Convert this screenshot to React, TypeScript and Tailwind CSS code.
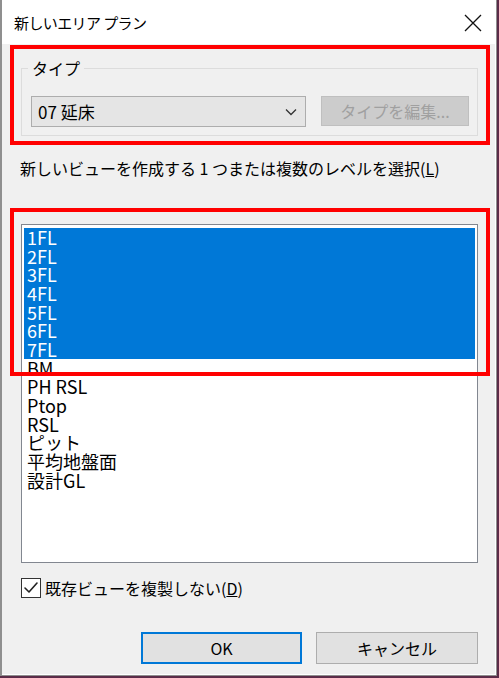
import React from "react";

const LEVELS = [
  { name: "1FL", selected: true },
  { name: "2FL", selected: true },
  { name: "3FL", selected: true },
  { name: "4FL", selected: true },
  { name: "5FL", selected: true },
  { name: "6FL", selected: true },
  { name: "7FL", selected: true },
  { name: "BM", selected: false },
  { name: "PH RSL", selected: false },
  { name: "Ptop", selected: false },
  { name: "RSL", selected: false },
  { name: "ピット", selected: false },
  { name: "平均地盤面", selected: false },
  { name: "設計GL", selected: false },
];

const FONT = "font-['Noto_Sans_CJK_JP','Noto_Sans',sans-serif]";

export default function App() {
  return (
    <div className={`relative h-[678px] w-[499px] bg-[#5b2c48] ${FONT} text-black`}>
      <div className="flex h-[676px] w-[497px] flex-col border-b border-l-2 border-r border-[#8f8f8f]">
        <div className="flex flex-1 flex-col border-b border-r border-white bg-[#f0f0f0]">
          {/* Title bar */}
          <div className="flex h-[44px] shrink-0 items-center justify-between bg-white pl-[12px] pr-[12px]">
            <span className="text-[15px] leading-none tracking-[-0.6px]">新しいエリア プラン</span>
            <svg width="18" height="18" viewBox="0 0 18 18" className="mr-[1px] mt-[1px]">
              <path d="M1 1 L17 17 M17 1 L1 17" stroke="#111" strokeWidth="1.3" />
            </svg>
          </div>

          {/* Body */}
          <div className="flex flex-1 flex-col pl-[19px] pr-[17px]">
            {/* Type group */}
            <div className="relative mt-[24px] h-[68px] border border-[#dcdcdc]">
              <span className="absolute -top-[12px] left-[6px] bg-[#f0f0f0] px-[4px] text-[16px] leading-[22px]">
                タイプ
              </span>
              <div className="ml-[9px] mt-[27px] flex gap-[15px]">
                <div className="flex h-[31px] w-[275px] items-center justify-between border border-[#adadad] bg-[#e5e5e5] pl-[6px] pr-[8px]">
                  <span className="text-[17px] leading-none">07 延床</span>
                  <svg width="12" height="8" viewBox="0 0 12 8">
                    <path d="M1 1.5 L6 6.5 L11 1.5" stroke="#333" strokeWidth="1.3" fill="none" />
                  </svg>
                </div>
                <div className="flex h-[30px] w-[148px] items-center justify-center border border-[#bfbfbf] bg-[#cccccc] text-[16px] leading-none text-[#a0a0a0]">
                  タイプを編集...
                </div>
              </div>
            </div>

            {/* Prompt */}
            <div className="ml-[-1px] mt-[22px] text-[16px] leading-[20px]">
              新しいビューを作成する 1 つまたは複数のレベルを選択(<span className="underline">L</span>)
            </div>

            {/* Level list */}
            <div className="mt-[46px] h-[339px] border border-[#828790] bg-white px-[2px] pt-[3px]">
              {LEVELS.map((l) => (
                <div
                  key={l.name}
                  className={`h-[18.67px] pl-[3px] text-[18px] leading-[18.67px] ${
                    l.selected ? "bg-[#0078d7] text-white" : "text-black"
                  }`}
                >
                  {l.name}
                </div>
              ))}
            </div>

            {/* Checkbox */}
            <div className="mt-[15px] flex items-center gap-[4px]">
              <div className="flex h-[20px] w-[20px] items-center justify-center border border-[#333] bg-white">
                <svg width="16" height="14" viewBox="0 0 16 14">
                  <path d="M2 7 L6 11 L14 2" stroke="#222" strokeWidth="1.6" fill="none" strokeLinecap="round" strokeLinejoin="round" />
                </svg>
              </div>
              <span className="text-[16px] leading-[20px]">
                既存ビューを複製しない(<span className="underline">D</span>)
              </span>
            </div>

            {/* Buttons */}
            <div className="mt-[34px] flex justify-end gap-[14px]">
              <div className="flex h-[32px] w-[161px] items-center justify-center border-2 border-[#0078d7] bg-[#e1e1e1] text-[16px] leading-none">
                OK
              </div>
              <div className="flex h-[32px] w-[162px] items-center justify-center border border-[#adadad] bg-[#e1e1e1] text-[16px] leading-none">
                キャンセル
              </div>
            </div>
          </div>
        </div>
      </div>

      {/* Annotation boxes */}
      <div className="pointer-events-none absolute left-[10px] top-[45px] h-[100px] w-[480px] border-4 border-[#ff0000]" />
      <div className="pointer-events-none absolute left-[10px] top-[208px] h-[168px] w-[480px] border-4 border-[#ff0000]" />
    </div>
  );
}
